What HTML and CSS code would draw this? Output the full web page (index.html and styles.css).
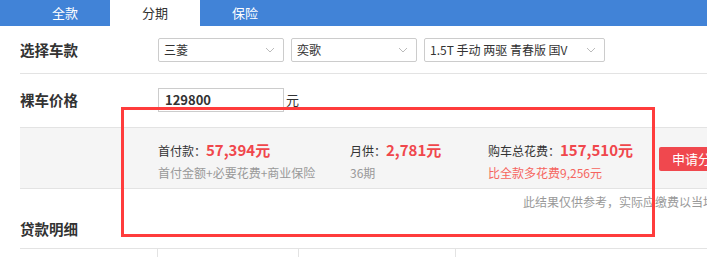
FILE: index.html
```html
<!DOCTYPE html>
<html lang="zh-CN">
<head>
<meta charset="utf-8">
<title>分期计算</title>
<link rel="stylesheet" href="styles.css">
</head>
<body>
<div class="page">
  <div class="tabs">
    <div class="tab">全款</div>
    <div class="tab active">分期</div>
    <div class="tab">保险</div>
  </div>
  <div class="content">
    <div class="row row-model">
      <div class="label">选择车款</div>
      <div class="selects">
        <div class="select s1"><span>三菱</span><svg class="arrow" width="10" height="6" viewBox="0 0 10 6"><polyline points="1,1 5,5 9,1" fill="none" stroke="#bbb" stroke-width="1"/></svg></div>
        <div class="select s2"><span>奕歌</span><svg class="arrow" width="10" height="6" viewBox="0 0 10 6"><polyline points="1,1 5,5 9,1" fill="none" stroke="#bbb" stroke-width="1"/></svg></div>
        <div class="select s3"><span>1.5T 手动 两驱 青春版 国V</span><svg class="arrow" width="10" height="6" viewBox="0 0 10 6"><polyline points="1,1 5,5 9,1" fill="none" stroke="#bbb" stroke-width="1"/></svg></div>
      </div>
    </div>
    <div class="row row-price">
      <div class="label">裸车价格</div>
      <div class="input">129800</div>
      <span class="unit">元</span>
    </div>
    <div class="result">
      <div class="item i1">
        <div class="line1">首付款：<b>57,394元</b></div>
        <div class="line2">首付金额+必要花费+商业保险</div>
      </div>
      <div class="item i2">
        <div class="line1">月供：<b>2,781元</b></div>
        <div class="line2">36期</div>
      </div>
      <div class="item i3">
        <div class="line1">购车总花费：<b>157,510元</b></div>
        <div class="line2 more">比全款多花费9,256元</div>
      </div>
      <div class="btn">申请分期</div>
    </div>
    <div class="note">此结果仅供参考，实际应缴费以当地为准。</div>
    <div class="title">贷款明细</div>
    <div class="table">
      <div class="cell c1"></div>
      <div class="cell c2"></div>
      <div class="cell c3"></div>
      <div class="cell c4"></div>
    </div>
  </div>
  <div class="mark"></div>
</div>
</body>
</html>
```

FILE: styles.css
```css
html, body {
  margin: 0;
  padding: 0;
  background: #fff;
  overflow: hidden;
}
body {
  font-family: "Noto Sans CJK SC", "Noto Sans", sans-serif;
  color: #333;
}
.page {
  position: relative;
  width: 900px;
}
.tabs {
  display: flex;
  height: 26px;
  background: #4183d7;
  padding-left: 20px;
}
.tab {
  width: 90px;
  text-align: center;
  line-height: 26px;
  font-size: 13px;
  color: #fff;
}
.tab.active {
  background: #fff;
  color: #333;
}
.content {
  padding-left: 20px;
}
.row {
  display: flex;
  align-items: center;
  border-bottom: 1px solid #e3e3e3;
}
.row-model {
  padding: 12px 0 11px;
}
.row-price {
  padding: 14px 0 15px;
}
.label {
  width: 138px;
  font-size: 14.5px;
  font-weight: bold;
  line-height: 20px;
}
.selects {
  display: flex;
  gap: 7px;
}
.select {
  box-sizing: border-box;
  height: 24px;
  border: 1px solid #ccc;
  border-radius: 2px;
  display: flex;
  align-items: center;
  justify-content: space-between;
  padding: 0 8px 0 5px;
  font-size: 12px;
  line-height: 22px;
  color: #333;
}
.s1, .s2 { width: 126px; }
.s3 { width: 181px; }
.arrow { display: block; }
.input {
  box-sizing: border-box;
  width: 126px;
  height: 24px;
  border: 1px solid #ccc;
  padding-left: 6px;
  font-size: 13px;
  font-weight: bold;
  line-height: 22px;
}
.unit {
  font-size: 13px;
  margin-left: 2px;
  line-height: 20px;
}
.result {
  display: flex;
  align-items: flex-start;
  background: #f5f5f5;
  border-bottom: 1px solid #e3e3e3;
  padding: 13px 0 6px 138px;
}
.item { flex: none; }
.i1 { width: 192px; }
.i2 { width: 138px; }
.i3 { width: 171px; }
.line1 {
  font-size: 12px;
  line-height: 18px;
  color: #333;
  white-space: nowrap;
}
.line1 b {
  font-size: 15px;
  color: #f0474c;
}
.line2 {
  margin-top: 4px;
  font-size: 12px;
  line-height: 18px;
  color: #999;
  white-space: nowrap;
}
.line2.more { color: #f5655f; }
.btn {
  margin-top: 6px;
  height: 24px;
  line-height: 24px;
  background: #f0484e;
  color: #fff;
  font-size: 13px;
  border-radius: 2px;
  padding: 0 13px;
  white-space: nowrap;
}
.note {
  padding: 4px 0 0 503px;
  font-size: 12px;
  line-height: 18px;
  color: #999;
  white-space: nowrap;
}
.title {
  margin-top: 6px;
  padding-bottom: 7px;
  font-size: 14.5px;
  font-weight: bold;
  line-height: 24px;
}
.table {
  display: flex;
  border-top: 1px solid #e3e3e3;
  height: 8px;
}
.cell { flex: none; height: 100%; }
.c1 { width: 137px; }
.c2 { width: 140px; border-left: 1px solid #e3e3e3; }
.c3 { width: 156px; border-left: 1px solid #e3e3e3; }
.c4 { width: 300px; border-left: 1px solid #e3e3e3; }
.mark {
  position: absolute;
  left: 121px;
  top: 107px;
  width: 534px;
  height: 130px;
  box-sizing: border-box;
  border: 3px solid #ff3c3c;
}
```
